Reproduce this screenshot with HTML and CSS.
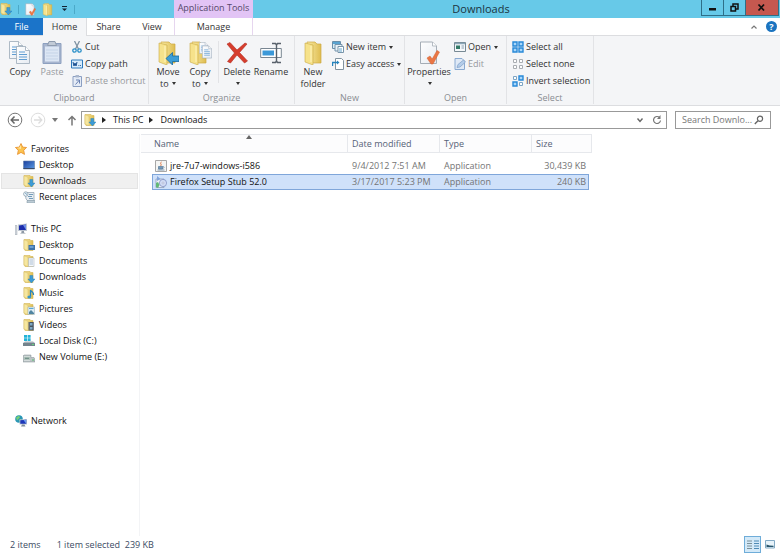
FILE: index.html
```html
<!DOCTYPE html>
<html lang="en">
<head>
<meta charset="utf-8">
<title>Downloads</title>
<link rel="stylesheet" href="styles.css">
</head>
<body>
<svg class="defs" aria-hidden="true">
  <defs>
    <linearGradient id="gold" x1="0" x2="1"><stop offset="0" stop-color="#f8eaa5"/><stop offset="1" stop-color="#dfbd50"/></linearGradient>
    <linearGradient id="blue" x1="0" y1="0" x2="1" y2="1"><stop offset="0" stop-color="#1a3f9c"/><stop offset="1" stop-color="#5b9ae4"/></linearGradient>
    <linearGradient id="paper" x1="0" y1="0" x2="1" y2="1"><stop offset="0" stop-color="#fff"/><stop offset="1" stop-color="#e6ebf2"/></linearGradient>
  </defs>
  <symbol id="folder" viewBox="0 0 12 12"><path d="M1 .5h6l1 1h2v10H2L1 10z" fill="url(#gold)" stroke="#d5b654" stroke-width=".6"/><path d="M1 .8l4 1.4v9.500L1 10z" fill="#f6e7a0" stroke="#ceb053" stroke-width=".4"/></symbol>
  <symbol id="f-down" viewBox="0 0 12 12"><use href="#folder"/><path d="M6.800 4.500h3V8H12l-3.600 4L4.900 8h1.900z" fill="#3c9bd6" stroke="#1f79b5" stroke-width=".4"/></symbol>
  <symbol id="f-desk" viewBox="0 0 12 12"><use href="#folder"/><path d="M5.500 6h6.500v5H5.500z" fill="#3e73a8"/><path d="M6.500 7h4v2h-4z" fill="#6b9ed0"/></symbol>
  <symbol id="f-doc" viewBox="0 0 12 12"><use href="#folder"/><path d="M5.500 3H11v8.500H5.500z" fill="#f6f8fa" stroke="#9eabb4" stroke-width=".5"/><path d="M6.500 5h3.500M6.500 7h3.500M6.500 9h3.500" stroke="#8ba6c3" stroke-width=".7"/></symbol>
  <symbol id="f-music" viewBox="0 0 12 12"><use href="#folder"/><path d="M7.500 10V3c1 2 3.500 2 3 5" fill="none" stroke="#2784bf" stroke-width="1.300"/><ellipse cx="6.300" cy="10" rx="1.900" ry="1.500" fill="#3797cd"/></symbol>
  <symbol id="f-pic" viewBox="0 0 12 12"><use href="#folder"/><path d="M5 4h6.500v7.500H5z" fill="#dcecf5" stroke="#93a8b5" stroke-width=".5"/><path d="M6 9l2-2 3 3v1H6z" fill="#5085a1"/><path d="M6 5.500h4.500" stroke="#5ba7d5"/></symbol>
  <symbol id="f-video" viewBox="0 0 12 12"><use href="#folder"/><path d="M5.500 3H11v8.500H5.500z" fill="#48545e"/><path d="M7 4h2.500v2.500H7zM7 8h2.500v2.500H7z" fill="#7ca7c5"/><path d="M6.100 3.500v8M10.500 3.500v8" stroke="#dde" stroke-width=".6" stroke-dasharray="1 1"/></symbol>
  <symbol id="star" viewBox="0 0 12 12"><path d="M6 .5l1.700 3.600 3.900.4-2.900 2.800.8 4.100L6 9.400l-3.500 2 .8-4.100L.4 4.500l3.900-.4z" fill="#fcc34e" stroke="#e68d2b" stroke-width=".8"/><path d="M6 2v4L2 5l2.500-.5z" fill="#ffe7a0"/></symbol>
  <symbol id="desktop" viewBox="0 0 12 12"><path d="M.5 2h11v8H.5z" fill="url(#blue)" stroke="#6482a8" stroke-width=".6"/><path d="M.5 9.500h11" stroke="#394b68"/></symbol>
  <symbol id="recent" viewBox="0 0 12 12"><path d="M2 1.500h9v8.500H5L3 8z" fill="#e9eef3" stroke="#8b9eac" stroke-width=".7"/><circle cx="2.800" cy="3" r="2.200" fill="#f5fbff" stroke="#7990a2" stroke-width=".7"/><path d="M2.800 1.800V3l1 .5M6 3.500h4M5 5.500h4M6 7.500h4" fill="none" stroke="#5387ac" stroke-width=".8"/><path d="M4 9.500h8V12H4z" fill="#bccbd5" stroke="#7c929f" stroke-width=".5"/></symbol>
  <symbol id="pc" viewBox="0 0 12 12"><path d="M0 2.500h2V12H0z" fill="#d4d9df" stroke="#8993a0" stroke-width=".4"/><path d="M3 1.500l9-1v7.500H3z" fill="#bfc7d1"/><path d="M4 2.400l7-.8V7H4z" fill="#1c2dac"/><path d="M8 2l3-.4V7z" fill="#6d8ee8"/><path d="M6.500 8h2.500v1.500l2 1H5l1.500-1z" fill="#8e99a5"/></symbol>
  <symbol id="network" viewBox="0 0 12 12"><circle cx="4" cy="4" r="3.800" fill="#2996b5"/><path d="M1 2.500l3-2 1 2-3 3zM4 5l2-1v3z" fill="#75cf76"/><path d="M4.500 4.500L12 4v5.500H4.500z" fill="#bac4d1"/><path d="M5.300 5.200l5.900-.4v4H5.300z" fill="#1c36b9"/><path d="M8.500 5l2.700-.2v4z" fill="#6b9cf0"/><path d="M7 9.500h2.500l1 2H6z" fill="#808d9a"/></symbol>
  <symbol id="disk" viewBox="0 0 12 12"><path d="M1 0h3v2.700H1zM4.600 0h3v2.700h-3zM1 3.300h3V6H1zM4.600 3.300h3V6h-3z" fill="#22b3d8"/><path d="M0 8l2-1.500h8L12 8v3H0z" fill="#a5b0b7"/><path d="M0 8h12v3H0z" fill="#74838c"/><path d="M9 9h2v1H9z" fill="#5fd67c"/></symbol>
  <symbol id="volume" viewBox="0 0 12 12"><path d="M0 5l1-1h7v2.500h3L12 8v3H0z" fill="#bcc3c6" stroke="#838e93" stroke-width=".5"/><path d="M1 5h6v4.500H1z" fill="#eef3f1"/><path d="M2 5.500v3.500M4 5.500v3.500M6 5.500v3.500M2 7.300h4" stroke="#547a6e" stroke-width=".8"/><path d="M9 8.500h2v1H9z" fill="#58bd70"/></symbol>
  <symbol id="java" viewBox="0 0 12 12"><path d="M.5.500h11v11H.5z" fill="#f5f5f3" stroke="#a7a7a7"/><path d="M6.500 2C4 3.500 7.500 4 5.500 6" fill="none" stroke="#df713b"/><path d="M3.500 6.500h4V9h-4zM2.500 10h7" fill="#7598b8" stroke="#54799a" stroke-width=".7"/><path d="M7.500 6.500c2-.5 2 2 0 2" fill="none" stroke="#54799a" stroke-width=".7"/></symbol>
  <symbol id="setup" viewBox="0 0 12 12"><path d="M1 3h8v8.500H1z" fill="#eef2f7" stroke="#8495b2" stroke-width=".7"/><path d="M2 0l3.500 3L2 5z" fill="#83a6dc"/><circle cx="8" cy="7" r="3.600" fill="#d3ddf5" stroke="#7886bd" stroke-width=".7"/><circle cx="8" cy="7" r="1" fill="#fff" stroke="#8792bd" stroke-width=".5"/><path d="M1 7l2-1 1.500 3L3 12 1 11z" fill="#61b877"/></symbol>
  <symbol id="check-doc" viewBox="0 0 21 24"><path d="M1.500 1h12l4 4v17.500h-16z" fill="url(#paper)" stroke="#a5adb6"/><path d="M13.500 1v4h4" fill="#fff" stroke="#a5adb6" stroke-width=".8"/><path d="M8 17l3-2 2.200 3L18 9.500l2.500 1.500-6.500 12h-2z" fill="#ea7645" stroke="#d2602f" stroke-width=".5"/></symbol>
  <symbol id="big-folder" viewBox="0 0 20 24"><path d="M4 1h8l2 2h4v19H7l-3-3z" fill="url(#gold)" stroke="#cda944" stroke-width=".7"/><path d="M2 2l8 2v20l-8-3z" fill="#f6e28b" stroke="#c9a944" stroke-width=".6"/><path d="M8 5v16" stroke="#fff4bd"/></symbol>
  <symbol id="page" viewBox="0 0 14 18"><path d="M.5.500h9l4 4v13H.5z" fill="url(#paper)" stroke="#9ba9b8" stroke-width=".8"/><path d="M9.500.500v4h4" fill="#fff" stroke="#9ba9b8" stroke-width=".8"/><path d="M3 6h6M3 8.500h8M3 11h8M3 13.500h8" stroke="#609dd2"/></symbol>
</svg>

<header class="titlebar">
  <div class="quick">
    <svg class="i12"><use href="#f-down"/></svg><i class="bar"></i>
    <button aria-label="Properties"><svg width="11" height="13"><use href="#check-doc"/></svg></button>
    <button aria-label="New folder"><svg width="11" height="13"><use href="#big-folder"/></svg></button>
    <button aria-label="Customize toolbar"><svg width="7" height="6" viewBox="0 0 7 6"><path d="M1 .5h5" stroke="#123"/><path d="M1 2.500h5L3.500 5z" fill="#123"/></svg></button>
    <i class="bar"></i>
  </div>
  <div class="context">Application Tools</div>
  <h1>Downloads</h1>
  <div class="winbtns">
    <button aria-label="Minimize"><svg width="9" height="9" viewBox="0 0 9 9"><path d="M1 5h7v2.500H1z" fill="#111"/></svg></button>
    <button aria-label="Restore"><svg width="9" height="9" viewBox="0 0 9 9"><path d="M1 3.500h4.500V8H1zM3 3V1h5v5H6" fill="none" stroke="#111" stroke-width="1.500"/></svg></button>
    <button class="close" aria-label="Close"><svg width="9" height="9" viewBox="0 0 9 9"><path d="M1.500 1.500l5.500 6M7 1.500l-5.500 6" stroke="#111" stroke-width="1.800"/></svg></button>
  </div>
</header>

<nav class="tabs">
  <button class="file">File</button>
  <button class="active">Home</button>
  <button>Share</button>
  <button class="view">View</button>
  <button class="manage">Manage</button>
  <span class="tabtools">
    <button aria-label="Collapse ribbon"><svg width="8" height="8" viewBox="0 0 8 8"><path d="M1.500 5.500L4 3l2.500 2.500" fill="none" stroke="#777" stroke-width="1.200"/></svg></button>
    <button class="help" aria-label="Help">?</button>
  </span>
</nav>

<section class="ribbon">
  <div class="group clip">
    <div class="tools">
      <button class="big"><svg width="22" height="24" viewBox="0 0 22 24"><use href="#page" width="14" height="18"/><use href="#page" x="7" y="5" width="14" height="18"/></svg>Copy</button>
      <button class="big off"><svg width="22" height="24" viewBox="0 0 22 24"><path d="M2 2.500h18v20H2z" fill="#a7b5cf" stroke="#8da0bf"/><path d="M4 5.500h14v15H4z" fill="#dce6f4"/><path d="M8 .500h6l1.500 4h-9z" fill="#c2cbd7" stroke="#8f9caf"/><path d="M5 9h12M5 12h12M5 15h12M5 18h12" stroke="#c4d3e7"/></svg>Paste</button>
      <div class="small">
        <button><svg class="i12" viewBox="0 0 12 12"><path d="M3.500 0l4 8M8.500 0l-4 8" stroke="#7f93a3" stroke-width="1.300"/><circle cx="3.500" cy="9.500" r="1.700" fill="none" stroke="#2a8fc8" stroke-width="1.300"/><circle cx="8.500" cy="9.500" r="1.700" fill="none" stroke="#2a8fc8" stroke-width="1.300"/></svg>Cut</button>
        <button><svg class="i12" viewBox="0 0 12 12"><path d="M.5 2h11v8H.5z" fill="#d7ebfb" stroke="#2e7abc"/><path d="M2 4l1 4 1-3 1 3 1-4M7.500 7.500h.8M9.200 7.500h.8" fill="none" stroke="#194f91"/></svg>Copy path</button>
        <button class="off"><svg class="i12" viewBox="0 0 12 12"><path d="M2 1.500h8.500v10H2z" fill="#e4ebf6" stroke="#8b9fc2"/><path d="M4.500 0h3.500v2.500H4.500z" fill="#aab7cc"/><path d="M4.500 9.500l3.500-4M5 5h3.500v3.500" fill="none" stroke="#6880b1"/></svg>Paste shortcut</button>
      </div>
    </div>
    <h2>Clipboard</h2>
  </div>
  <div class="group org">
    <div class="tools">
      <button class="big"><svg width="22" height="24" viewBox="0 0 22 24"><use href="#big-folder" width="20" height="24"/><path d="M9 17.500l6.500-6v3.500H22v5.500h-6.500V24z" fill="#3c9dd6" stroke="#17699f" stroke-width=".8"/></svg>Move<br>to <b class="arr"></b></button>
      <button class="big"><svg width="24" height="24" viewBox="0 0 24 24"><use href="#big-folder" width="20" height="24"/><use href="#page" x="11" y="1" width="9" height="12"/><use href="#page" x="14" y="4" width="10" height="14"/></svg>Copy<br>to <b class="arr"></b></button>
      <i class="bar"></i>
      <button class="big"><svg width="22" height="24" viewBox="0 0 22 24"><path d="M1 3l3-1.500 7 7.500 8-7 2 1-7.500 8.500 8 8.500-3 2-7.500-8-6.500 8-3-1.500L8.500 12z" fill="#d63d2d" stroke="#b22b20" stroke-width=".6"/></svg>Delete<br><b class="arr"></b></button>
      <button class="big"><svg width="22" height="24" viewBox="0 0 22 24"><path d="M.7 7.500h20.600v9H.7z" fill="#fff" stroke="#798692"/><path d="M2.500 9.500H14v5H2.500z" fill="#3b98d8"/><path d="M12 2.500h3.500l1 1.500 1-1.500H21M12 21.500h3.500l1-1.500 1 1.500H21M16.500 4v16" fill="none" stroke="#58616b" stroke-width="1.400"/></svg>Rename</button>
    </div>
    <h2>Organize</h2>
  </div>
  <div class="group new">
    <div class="tools">
      <button class="big"><svg width="20" height="24"><use href="#big-folder"/></svg>New<br>folder</button>
      <div class="small">
        <button><svg class="i12" viewBox="0 0 12 12"><path d="M.5.500h8v7h-8z" fill="#d8ebf6" stroke="#6a8faa"/><path d="M1 2h7" stroke="#2f8cc6" stroke-width="1.500"/><path d="M3 3.500h7V10H3z" fill="#e8f2f8" stroke="#7594ac"/><path d="M6 5.500h5.500v6H6z" fill="#fff" stroke="#7895aa"/><path d="M7 8h3M7 10h3" stroke="#60a5cf"/></svg>New item <b class="arr"></b></button>
        <button><svg class="i12" viewBox="0 0 12 12"><path d="M3.500.500h6l2 2v9h-8z" fill="#fff" stroke="#82939f"/><path d="M.5 8V4.500H5" fill="none" stroke="#2584be" stroke-width="1.400"/><path d="M5 2.500l2.500 2L5 6.500z" fill="#2584be"/></svg>Easy access <b class="arr"></b></button>
      </div>
    </div>
    <h2>New</h2>
  </div>
  <div class="group open">
    <div class="tools">
      <button class="big"><svg width="21" height="24"><use href="#check-doc"/></svg>Properties<br><b class="arr"></b></button>
      <div class="small">
        <button><svg class="i12" viewBox="0 0 12 12"><path d="M.5 1.500h11v9H.5z" fill="#f5f8fa" stroke="#778994"/><path d="M1 2.500h10" stroke="#8ba6b7" stroke-width="1.500"/><path d="M2 4.500h4V8H2z" fill="#347b68"/><path d="M7.500 5H10M7.500 7H10" stroke="#8ba0b0"/></svg>Open <b class="arr"></b></button>
        <button class="off"><svg class="i12" viewBox="0 0 12 12"><path d="M1 .5h7l2.500 2.500v8.500H1z" fill="#dfe9f6" stroke="#8aaad1"/><path d="M3 9.500l1-3L9.500 2l2 2L6 9z" fill="#b4cdea" stroke="#7e9dc5" stroke-width=".7"/></svg>Edit</button>
      </div>
    </div>
    <h2>Open</h2>
  </div>
  <div class="group select">
    <div class="tools">
      <div class="small">
        <button><svg class="i12" viewBox="0 0 12 12"><path d="M1 1h4v4H1zM7 1h4v4H7zM1 7h4v4H1zM7 7h4v4H7z" fill="#a9d7fa" stroke="#2789d8" stroke-width="1.400"/></svg>Select all</button>
        <button><svg class="i12" viewBox="0 0 12 12"><path d="M1.500 1.500h3v3h-3zM7.500 1.500h3v3h-3zM1.500 7.500h3v3h-3zM7.500 7.500h3v3h-3z" fill="#fff" stroke="#a9adb2"/></svg>Select none</button>
        <button><svg class="i12" viewBox="0 0 12 12"><path d="M1.500 1.500h3v3h-3zM7.500 7.500h3v3h-3z" fill="#fff" stroke="#7ca5c5"/><path d="M7 1h4v4H7zM1 7h4v4H1z" fill="#a9d7fa" stroke="#2789d8" stroke-width="1.400"/></svg>Invert selection</button>
      </div>
    </div>
    <h2>Select</h2>
  </div>
</section>

<div class="address">
  <button aria-label="Back"><svg width="16" height="16" viewBox="0 0 16 16"><circle cx="8" cy="8" r="6.800" fill="#fff" stroke="#777"/><path d="M12 8H4.500M7.500 4.500L4.200 8l3.300 3.500" fill="none" stroke="#666" stroke-width="1.500"/></svg></button>
  <button aria-label="Forward"><svg width="16" height="16" viewBox="0 0 16 16"><circle cx="8" cy="8" r="6.800" fill="#fff" stroke="#ddd"/><path d="M4 8h7.500M8.500 4.500L11.800 8l-3.300 3.500" fill="none" stroke="#ddd" stroke-width="1.300"/></svg></button>
  <button aria-label="Recent locations"><svg width="6" height="4" viewBox="0 0 6 4"><path d="M0 0h6L3 4z" fill="#777"/></svg></button>
  <button aria-label="Up"><svg width="10" height="11" viewBox="0 0 10 11"><path d="M5 10.500V1.500M1.500 5L5 1.500 8.500 5" fill="none" stroke="#777" stroke-width="1.500"/></svg></button>
  <div class="path">
    <svg class="i12"><use href="#f-down"/></svg>
    <b class="crumb"></b><a href="#pc-root">This PC</a><b class="crumb"></b><a href="#downloads">Downloads</a>
    <span class="pathtools">
      <button aria-label="Previous locations"><svg width="8" height="8" viewBox="0 0 8 8"><path d="M1.500 2.500L4 5.500l2.500-3" fill="none" stroke="#666" stroke-width="1.400"/></svg></button>
      <button aria-label="Refresh"><svg width="10" height="10" viewBox="0 0 10 10"><path d="M7.500 2.500A3.500 3.500 0 1 0 8.500 5.500" fill="none" stroke="#777" stroke-width="1.200"/><path d="M8.500 0v4H5z" fill="#777"/></svg></button>
    </span>
  </div>
  <label class="search"><input type="text" aria-label="Search Downloads" placeholder="Search Downlo..."><svg width="10" height="10" viewBox="0 0 10 10"><circle cx="6" cy="3.800" r="2.600" fill="none" stroke="#666" stroke-width="1.200"/><path d="M4 5.800L.8 9" stroke="#666" stroke-width="1.400"/></svg></label>
</div>

<main>
  <aside>
    <ul>
      <li class="root"><svg class="i12"><use href="#star"/></svg>Favorites</li>
      <li><svg class="i12"><use href="#desktop"/></svg>Desktop</li>
      <li class="current" id="downloads"><svg class="i12"><use href="#f-down"/></svg>Downloads</li>
      <li><svg class="i12"><use href="#recent"/></svg>Recent places</li>
    </ul>
    <ul class="computer">
      <li class="root" id="pc-root"><svg class="i12"><use href="#pc"/></svg>This PC</li>
      <li><svg class="i12"><use href="#f-desk"/></svg>Desktop</li>
      <li><svg class="i12"><use href="#f-doc"/></svg>Documents</li>
      <li><svg class="i12"><use href="#f-down"/></svg>Downloads</li>
      <li><svg class="i12"><use href="#f-music"/></svg>Music</li>
      <li><svg class="i12"><use href="#f-pic"/></svg>Pictures</li>
      <li><svg class="i12"><use href="#f-video"/></svg>Videos</li>
      <li><svg class="i12"><use href="#disk"/></svg>Local Disk (C:)</li>
      <li><svg class="i12"><use href="#volume"/></svg>New Volume (E:)</li>
    </ul>
    <ul>
      <li class="root"><svg class="i12"><use href="#network"/></svg>Network</li>
    </ul>
  </aside>
  <section class="files">
    <table>
      <colgroup><col class="c-pad"><col class="c-name"><col class="c-date"><col class="c-type"><col class="c-size"><col class="c-end"></colgroup>
      <thead>
        <tr><th colspan="2" class="sorted">Name</th><th>Date modified</th><th>Type</th><th colspan="2">Size</th></tr>
      </thead>
      <tbody>
        <tr class="gap"><td colspan="6"></td></tr>
        <tr><td></td><td class="name"><span><svg class="i12"><use href="#java"/></svg>jre-7u7-windows-i586</span></td><td>9/4/2012 7:51 AM</td><td>Application</td><td class="size">30,439 KB</td><td></td></tr>
        <tr class="picked"><td></td><td class="name"><span><svg class="i12"><use href="#setup"/></svg>Firefox Setup Stub 52.0</span></td><td>3/17/2017 5:23 PM</td><td>Application</td><td class="size">240 KB</td><td></td></tr>
      </tbody>
    </table>
  </section>
</main>

<footer>
  <span>2 items</span><span>1 item selected&nbsp; 239 KB</span>
  <div class="views">
    <button class="on" aria-label="Details view"><svg width="12" height="12" viewBox="0 0 12 12"><path d="M0 2h5M0 4.500h5M0 7h5M0 9.500h5" stroke="#7a9099"/><path d="M7 2h5M7 4.500h5M7 7h5M7 9.500h5" stroke="#4e8bb5"/></svg></button>
    <button aria-label="Large icons view"><svg width="10" height="9" viewBox="0 0 10 9"><path d="M.5.500h9v7.500h-9z" fill="#e7f3fa" stroke="#82a9c4"/><path d="M1.500 4.500l3 1 4 .3V7h-7z" fill="#27556b"/></svg></button>
  </div>
</footer>
</body>
</html>
```
FILE: styles.css
```css
* { box-sizing: border-box; }
body {
  margin: 0;
  min-height: 100vh;
  display: flex;
  flex-direction: column;
  font: 9px/12px "Open Sans", "Noto Sans", sans-serif;
  color: #111;
  background: #fff;
}
.defs { position: absolute; width: 0; height: 0; }
svg { display: block; flex: none; }
button { font: inherit; color: inherit; background: none; border: 0; padding: 0; margin: 0; }
h1, h2, ul { margin: 0; padding: 0; font-weight: 400; list-style: none; }
a { color: inherit; text-decoration: none; }
.i12 { width: 12px; height: 12px; }

.titlebar { display: flex; height: 18px; background: #67c9e8; color: #1c3440; }
.quick { width: 174px; display: flex; align-items: center; gap: 8px; flex: none; }
.quick .bar { width: 1px; height: 9px; background: #4ba9c8; margin: 0 -2px; }
.quick button:nth-of-type(2) { margin-left: -2px; }
.context { width: 79px; flex: none; background: #e2c4f5; color: #56486a; text-align: center; line-height: 16px; }
h1 { flex: 1; text-align: center; font-size: 11px; line-height: 18px; padding-left: 8px; }
.winbtns { display: flex; height: 16px; width: 78px; flex: none; margin-right: 1px; border: 1px solid #2e6f88; border-top: 0; }
.winbtns button { flex: 22; display: grid; place-items: center; border-right: 1px solid #2e6f88; }
.winbtns .close { flex: 34; background: #c5584f; border-right: 0; }

.tabs { display: flex; height: 18px; border-bottom: 1px solid #dcdde0; line-height: 18px; color: #333; }
.tabs > button { width: 43px; }
.tabs .file { background: #1b74c9; color: #fff; height: 17px; }
.tabs .active { background: #f4f5f7; border-right: 1px solid #dcdde0; height: 18px; width: 44px; }
.tabs .view { width: 44px; }
.tabs .manage { width: 79px; border: solid #e6d6ef; border-width: 0 1px; }
.tabtools { margin-left: auto; display: flex; align-items: center; gap: 8px; padding-right: 3px; }
.tabtools .help { width: 11px; height: 11px; border-radius: 50%; background: #1b74c0; color: #fff; font-weight: 700; line-height: 11px; }

.ribbon { display: flex; height: 70px; background: #f4f5f7; border-bottom: 1px solid #dcdde0; color: #333; }
.group { display: flex; flex-direction: column; border-right: 1px solid #e2e3e6; margin-bottom: 1px; flex: none; }
.clip { width: 149px; }
.org { width: 146px; }
.new { width: 110px; }
.open { width: 102px; }
.select { width: 87px; }
.tools { display: flex; flex: 1; padding-top: 5px; }
.group h2 { color: #8a8d92; text-align: center; font-size: 9px; line-height: 12px; }
.big { width: 32px; display: block; white-space: nowrap; align-self: flex-start; }
.big svg { margin: 0 auto 1px; }
.clip .big { margin-left: 4px; }
.clip .big + .big { margin-left: 0; }
.org .big:first-child { margin-left: 3px; }
.org .big:nth-of-type(4) { width: 36px; }
.org .bar { width: 1px; height: 42px; background: #e2e3e6; margin: 0 2px; }
.new .big { width: 36px; margin-right: 1px; }
.open .big { width: 48px; margin-right: 1px; }
.select .small { margin-left: 5px; }
.small { display: flex; flex-direction: column; gap: 5px; }
.clip .small { margin-left: 3px; }
.small button { display: flex; align-items: center; gap: 2px; height: 12px; white-space: nowrap; }
.off { color: #96999e; }
.arr { display: inline-block; border: 2px solid transparent; border-top: 3px solid #333; border-bottom: 0; margin-left: 1px; vertical-align: 2px; }

.address { display: flex; align-items: center; height: 28px; padding: 0 9px 0 7px; }
.address > button:nth-child(2) { margin-left: 7px; }
.address > button:nth-child(3) { margin-left: 6px; }
.address > button:nth-child(4) { margin-left: 9px; }
.path { flex: 1; display: flex; align-items: center; height: 18px; margin-left: 4px; padding: 0 4px 0 2px; border: 1px solid #999; }
.crumb { border: 3px solid transparent; border-left: 4px solid #222; border-right: 0; margin: 0 7px 0 6px; }
.pathtools { display: flex; align-items: center; gap: 8px; margin-left: auto; }
.search { display: flex; align-items: center; width: 96px; height: 18px; margin-left: 8px; border: 1px solid #999; padding: 0 6px; }
.search input { flex: 1; min-width: 0; border: 0; padding: 0; outline: 0; font: inherit; background: none; }
.search input::placeholder { color: #777; opacity: 1; }

main { flex: 1; display: flex; }
aside { width: 140px; flex: none; border-right: 1px solid #f3f4f6; padding-top: 7px; }
aside ul { margin-bottom: 16px; }
aside .computer { margin-bottom: 48px; }
aside li { display: flex; align-items: center; gap: 4px; height: 16px; margin: 0 1px; padding-left: 22px; }
aside .root { padding-left: 14px; }
aside .current { background: #f0f0f0; border: 1px solid #e4e4e4; padding-left: 21px; }

.files { flex: 1; padding-left: 1px; }
table { width: 451px; table-layout: fixed; border-spacing: 0; color: #747474; }
.c-pad { width: 11px; }
.c-name { width: 196px; }
.c-date, .c-type { width: 92px; }
.c-size { width: 57px; }
.c-end { width: 3px; }
th { position: relative; height: 19px; padding: 0 4px; text-align: left; font-weight: 400; color: #566277; background: #fcfcfd; border: solid #e6e8ec; border-width: 1px 1px 1px 0; }
th.sorted { padding-left: 13px; }
.sorted::after { content: ""; position: absolute; left: 105px; top: 0; border: 3px solid transparent; border-bottom: 4px solid #666; border-top: 0; }
td { height: 16px; padding: 0 4px; white-space: nowrap; }
td:first-child, td:last-child { padding: 0; }
.gap td { height: 5px; }
td.name { color: #111; padding-left: 3px; }
.name span { display: flex; align-items: center; gap: 3px; }
td.size { text-align: right; padding-right: 3px; }
.picked td:not(:first-child):not(:last-child) { background: #cfe1fa; border: 0 solid #7fa6da; border-width: 1px 0; }
.picked td.name:not(:first-child):not(:last-child) { border-left-width: 1px; padding-left: 2px; }
.picked td.size:not(:first-child):not(:last-child) { border-right-width: 1px; padding-right: 2px; }

footer { display: flex; align-items: center; gap: 16px; height: 17px; padding-left: 10px; color: #3b4b63; }
.views { margin-left: auto; display: flex; align-items: center; gap: 4px; align-self: stretch; padding-right: 5px; }
.views button { display: grid; place-items: center; }
.views .on { width: 17px; height: 17px; background: #d3e9f8; border: 1px solid #6fadd9; }
```
